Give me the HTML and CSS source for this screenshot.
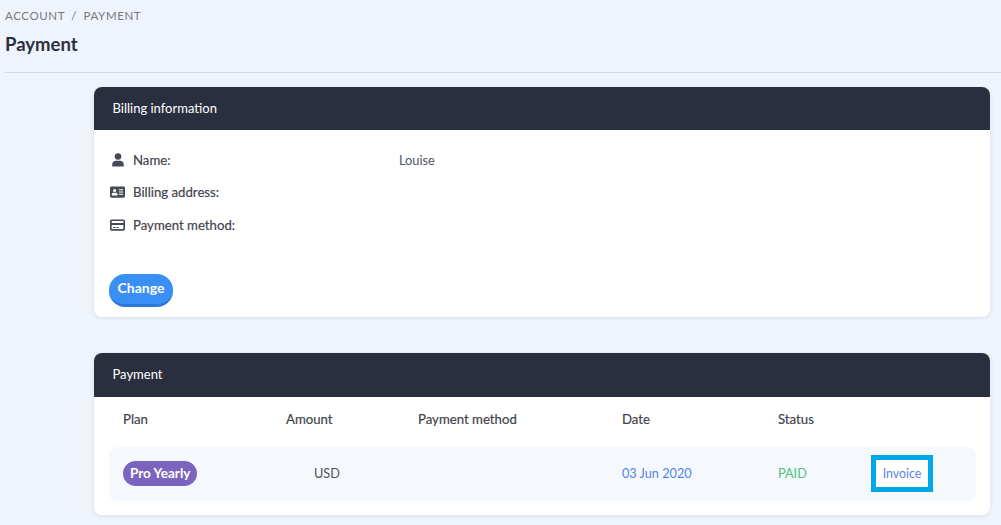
FILE: index.html
```html
<!DOCTYPE html>
<html lang="en">
<head>
<meta charset="utf-8">
<title>Payment</title>
<link rel="stylesheet" href="styles.css">
</head>
<body>
<header class="page-head">
  <div class="crumbs">ACCOUNT <span class="sep">/</span> PAYMENT</div>
  <h1 class="title">Payment</h1>
</header>
<main class="content">
  <section class="card billing">
    <h2 class="card-head">Billing information</h2>
    <div class="billing-body">
      <div class="info-row">
        <svg class="icon icon-user" viewBox="0 0 14 16"><circle cx="7" cy="4" r="3.800"/><path d="M0.300 15.500V13C0.300 10.400 2.500 9 4.500 9h5c2 0 4.200 1.400 4.200 4v2.500z"/></svg>
        <span class="info-label">Name:</span><span class="info-value">Louise</span>
      </div>
      <div class="info-row">
        <svg class="icon" viewBox="0 2 16 12"><path fill-rule="evenodd" d="M1.500 2h13A1.500 1.500 0 0 1 16 3.500v9a1.500 1.500 0 0 1-1.500 1.500h-13A1.500 1.500 0 0 1 0 12.500v-9A1.500 1.500 0 0 1 1.500 2zM5 4.700a1.700 1.700 0 1 0 0 3.400A1.700 1.700 0 0 0 5 4.700zM1.900 11.600h6.200V10.500c0-1-.9-1.600-1.800-1.600H3.700c-.9 0-1.800.6-1.800 1.600zM9.500 5v1.200H14V5zM9.500 7.400v1.200H14V7.400zM9.500 9.800V11H14V9.800z"/></svg>
        <span class="info-label">Billing address:</span>
      </div>
      <div class="info-row">
        <svg class="icon" viewBox="0 2 16 12"><path fill-rule="evenodd" d="M1.800 2h12.400A1.800 1.800 0 0 1 16 3.800v8.400a1.800 1.800 0 0 1-1.800 1.800H1.800A1.800 1.800 0 0 1 0 12.200V3.800A1.800 1.800 0 0 1 1.800 2zM1.800 3.800V5.800h12.400V3.800zM1.800 8v4.200h12.400V8zM3 10h3v1.200H3zM7 10h2v1.200H7z"/></svg>
        <span class="info-label">Payment method:</span>
      </div>
      <button class="change-btn" type="button">Change</button>
    </div>
  </section>
  <section class="card payments">
    <h2 class="card-head">Payment</h2>
    <div class="table-head grid">
      <span>Plan</span><span>Amount</span><span>Payment method</span><span>Date</span><span>Status</span>
    </div>
    <div class="table-row grid">
      <span class="plan"><span class="badge">Pro Yearly</span></span>
      <span class="amount">USD</span>
      <span></span>
      <span class="date">03 Jun 2020</span>
      <span class="paid">PAID</span>
      <a class="invoice" href="#">Invoice</a>
    </div>
  </section>
</main>
</body>
</html>
```
FILE: styles.css
```css
* { box-sizing: border-box; }
html, body { height: 100%; }
body {
  margin: 0;
  background: #eff3fb;
  font-family: "Lato", "Open Sans", sans-serif;
  font-size: 13.200px;
  color: #4a4f5c;
  overflow: hidden;
}
.page-head {
  margin: 0 0 14px 5px;
  padding-top: 8px;
  height: 73px;
  border-bottom: 1px solid #d6dae5;
}
.crumbs {
  font-size: 11.500px;
  line-height: 16px;
  letter-spacing: 0.600px;
  color: #77787c;
}
.sep { margin: 0 3px; }
.title {
  margin: 9px 0 0;
  font-size: 18.500px;
  line-height: 22px;
  font-weight: 700;
  color: #2a2f3f;
}
.content {
  margin: 0 11px 0 94px;
  display: flex;
  flex-direction: column;
  gap: 36px;
}
.card {
  background: #fff;
  border-radius: 8px;
  box-shadow: 0 1px 4px rgba(60, 70, 110, 0.12);
  overflow: hidden;
}
.card-head {
  margin: 0;
  padding: 0 19px 0 18.500px;
  height: 43px;
  background: #2a2f3f;
  color: #fff;
  font-size: 13px;
  font-weight: 400;
  line-height: 43px;
}
.billing { height: 230px; }
.billing-body { padding: 14px 15px 0; }
.info-row {
  display: flex;
  align-items: center;
  height: 32px;
}
.info-row:last-of-type { height: 34px; }
.icon {
  width: 15px;
  height: 12px;
  margin-right: 8px;
  margin-left: 1px;
  fill: #454a54;
  flex: none;
}
.icon-user { width: 12px; height: 14px; margin-left: 3px; margin-right: 9px; }
.info-label {
  width: 266px;
  color: #44444c;
  -webkit-text-stroke: 0.200px #44444c;
}
.info-value { color: #4f5460; font-size: 12.800px; }
.change-btn {
  display: block;
  margin-top: 32px;
  width: 64px;
  height: 33px;
  padding: 0 0 3px;
  border: 0;
  border-bottom: 3px solid #2b78d8;
  border-radius: 16px;
  background: #3a8ff5;
  color: #fff;
  font: 700 14px "Lato", sans-serif;
}
.payments { height: 162px; }
.payments .card-head { height: 44px; line-height: 42px; }
.grid {
  display: grid;
  grid-template-columns: 163px 132px 204px 156px 93px 1fr;
  align-items: center;
  margin: 0 14px 0 15px;
}
.table-head {
  height: 50px;
  padding: 0 0 7px 14px;
  color: #44444c;
  -webkit-text-stroke: 0.200px #44444c;
}
.table-row {
  height: 54px;
  background: #f5f9fd;
  border-radius: 8px;
  padding: 0 0 2px 14px;
  font-size: 12.700px;
}
.plan { margin-top: 1px; }
.badge {
  display: inline-block;
  height: 25px;
  padding: 0 7px;
  border-radius: 13px;
  background: #7a64bd;
  color: #fff;
  font-size: 13.500px;
  font-weight: 700;
  line-height: 24px;
}
.amount { padding-left: 28px; color: #4f5460; }
.date { color: #4f83e6; }
.paid { color: #4cc27e; }
.invoice {
  justify-self: start;
  width: 62px;
  height: 37px;
  margin-top: 1px;
  border: 5px solid #00a8ea;
  background: #fff;
  color: #5b84e8;
  font-size: 12.400px;
  text-align: center;
  line-height: 27px;
  text-decoration: none;
}
```
